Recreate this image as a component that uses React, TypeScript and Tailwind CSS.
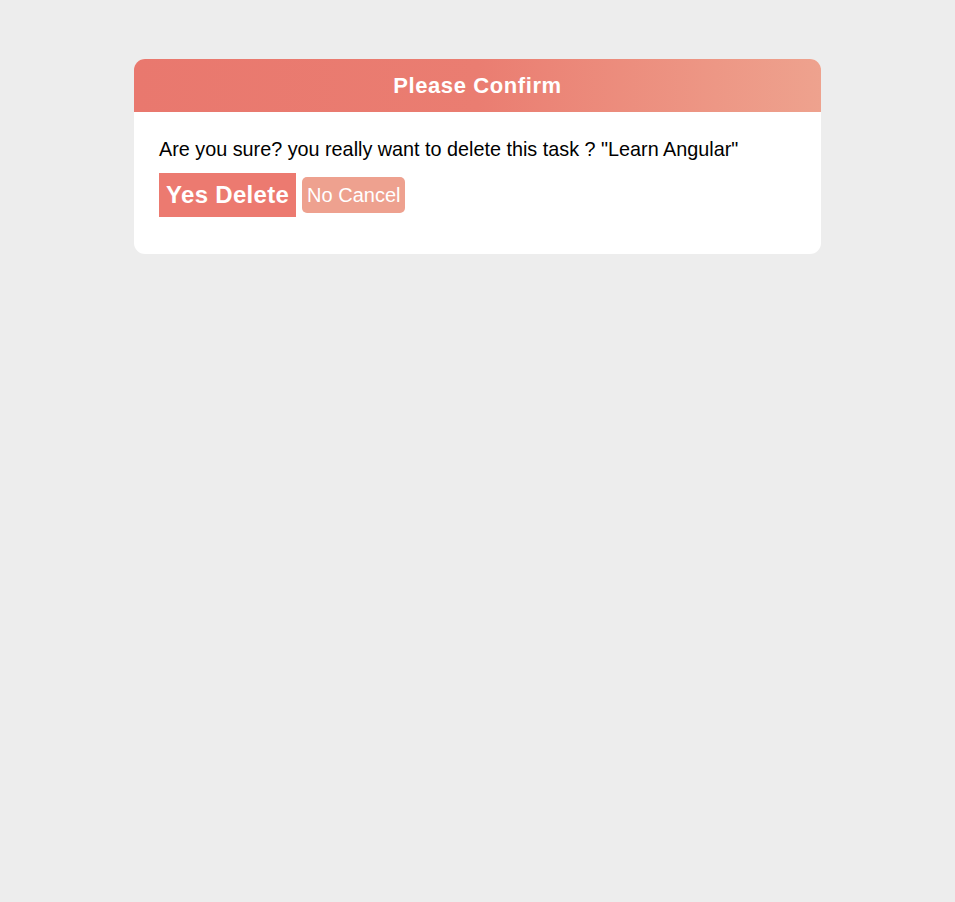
import React from "react";

export default function App() {
  return (
    <div className="min-h-[902px] bg-[#ededed] pt-[59px]" style={{ fontFamily: '"Liberation Sans", Arial, sans-serif' }}>
      <div className="mx-auto w-[687px] overflow-hidden rounded-[11px] bg-white">
        <div className="flex h-[53px] items-center justify-center bg-linear-to-r from-[#e9786e] via-[#ea7d71] via-50% to-[#eea28e] text-[22px] font-bold tracking-[0.6px] text-white">
          Please Confirm
        </div>
        <div className="px-[25px] pb-[37px] pt-[26px]">
          <p className="text-[19.8px] leading-[23px] text-black">
            Are you sure? you really want to delete this task ? "Learn Angular"
          </p>
          <div className="mt-[12px] flex items-center gap-[6px]">
            <button className="h-[44px] bg-[#ec7a70] px-[7px] text-[24px] font-bold tracking-[0.3px] text-white">Yes Delete</button>
            <button className="h-[36px] rounded-[5px] bg-[#eea18f] px-[5px] text-[20px] text-white">No Cancel</button>
          </div>
        </div>
      </div>
    </div>
  );
}
